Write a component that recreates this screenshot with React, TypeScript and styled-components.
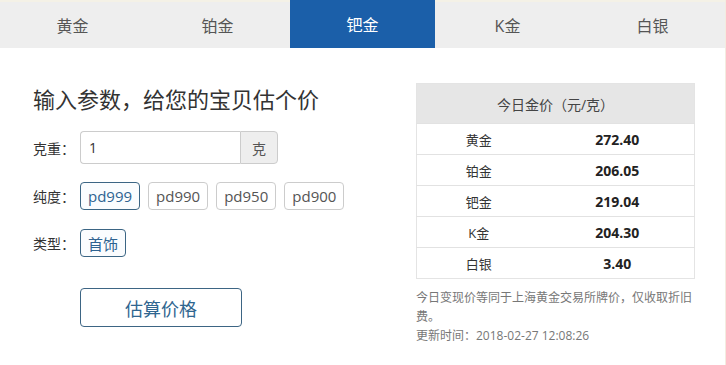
import React, { useState } from "react";
import styled, { createGlobalStyle } from "styled-components";

const Global = createGlobalStyle`
  html, body { margin: 0; padding: 0; background: #fff; }
  body { font-family: "Open Sans", "Noto Sans CJK SC", sans-serif; color: #333; }
  * { box-sizing: border-box; }
`;

const Page = styled.div`
  width: 726px;
  height: 365px;
  border-right: 1px solid #f3ece0;
  overflow: hidden;
`;

const TabBar = styled.div`
  display: grid;
  grid-template-columns: repeat(5, 145px);
  height: 48px;
  background: #eeeeee;
  border-top: 2px solid #f4f1e6;
`;

const Tab = styled.div<{ $active?: boolean }>`
  display: flex;
  align-items: center;
  justify-content: center;
  font-size: 16px;
  margin-top: ${(p) => (p.$active ? "-2px" : "0")};
  color: ${(p) => (p.$active ? "#fff" : "#555")};
  background: ${(p) => (p.$active ? "#1b5fa9" : "transparent")};
`;

const Main = styled.div`
  display: grid;
  grid-template-columns: 383px 279px;
  padding: 35px 0 0 33px;
`;

const Left = styled.div`
  display: flex;
  flex-direction: column;
`;

const Title = styled.h2`
  margin: 0 0 15px;
  font-size: 22px;
  font-weight: normal;
  line-height: 33px;
  color: #333;
`;

const Row = styled.div<{ $gap?: number }>`
  display: flex;
  align-items: center;
  margin-bottom: ${(p) => p.$gap ?? 18}px;
`;

const Label = styled.span`
  width: 47px;
  font-size: 14px;
  color: #333;
`;

const InputGroup = styled.div`
  display: flex;
  height: 33px;
`;

const Input = styled.div`
  width: 160px;
  border: 1px solid #cccccc;
  border-right: none;
  border-radius: 4px 0 0 4px;
  padding: 0 8px;
  display: flex;
  align-items: center;
  font-size: 14px;
  color: #333;
`;

const Addon = styled.div`
  width: 38px;
  border: 1px solid #cccccc;
  border-radius: 0 4px 4px 0;
  background: #eeeeee;
  display: flex;
  align-items: center;
  justify-content: center;
  font-size: 14px;
  color: #555;
`;

const Options = styled.div`
  display: flex;
  gap: 8px;
`;

const Option = styled.button<{ $selected?: boolean }>`
  height: 28px;
  padding: 0 7px;
  min-width: 46px;
  font-family: inherit;
  font-size: 15px;
  border-radius: 4px;
  cursor: pointer;
  background: ${(p) => (p.$selected ? "#fafcfe" : "#fff")};
  color: ${(p) => (p.$selected ? "#2e6391" : "#555")};
  border: 1px solid ${(p) => (p.$selected ? "#3b6584" : "#cccccc")};
`;

const Submit = styled.button`
  margin-left: 47px;
  width: 162px;
  height: 39px;
  border: 1px solid #3d6584;
  border-radius: 4px;
  background: #fff;
  color: #2f6690;
  font-family: inherit;
  font-size: 18px;
  cursor: pointer;
`;

const Right = styled.div`
  display: flex;
  flex-direction: column;
`;

const Table = styled.table`
  width: 279px;
  border-collapse: collapse;
  font-size: 13px;
  color: #333;
  border: 1px solid #e4e4e4;
`;

const HeadCell = styled.th`
  height: 40px;
  background: #e6e6e6;
  font-weight: normal;
  font-size: 14px;
  color: #444;
`;

const Cell = styled.td<{ $bold?: boolean; $w?: number }>`
  height: 31px;
  border-top: 1px solid #e2e2e2;
  text-align: center;
  font-weight: ${(p) => (p.$bold ? 700 : 400)};
  font-size: ${(p) => (p.$bold ? "14px" : "13px")};
  color: ${(p) => (p.$bold ? "#222" : "#333")};
  width: ${(p) => (p.$w ? `${p.$w}px` : "auto")};
`;

const Note = styled.p`
  margin: 9px 0 0;
  font-size: 12px;
  line-height: 19px;
  color: #777;
`;

const tabs = ["黄金", "铂金", "钯金", "K金", "白银"];
const purities = ["pd999", "pd990", "pd950", "pd900"];
const prices: [string, string][] = [
  ["黄金", "272.40"],
  ["铂金", "206.05"],
  ["钯金", "219.04"],
  ["K金", "204.30"],
  ["白银", "3.40"],
];

export default function App() {
  const [purity, setPurity] = useState("pd999");
  return (
    <Page>
      <Global />
      <TabBar>
        {tabs.map((t) => (
          <Tab key={t} $active={t === "钯金"}>
            {t}
          </Tab>
        ))}
      </TabBar>
      <Main>
        <Left>
          <Title>输入参数，给您的宝贝估个价</Title>
          <Row>
            <Label>克重：</Label>
            <InputGroup>
              <Input>1</Input>
              <Addon>克</Addon>
            </InputGroup>
          </Row>
          <Row $gap={19}>
            <Label>纯度：</Label>
            <Options>
              {purities.map((p) => (
                <Option key={p} $selected={p === purity} onClick={() => setPurity(p)}>
                  {p}
                </Option>
              ))}
            </Options>
          </Row>
          <Row $gap={31}>
            <Label>类型：</Label>
            <Options>
              <Option $selected>首饰</Option>
            </Options>
          </Row>
          <Row>
            <Submit>估算价格</Submit>
          </Row>
        </Left>
        <Right>
          <Table>
            <thead>
              <tr>
                <HeadCell colSpan={2}>今日金价（元/克）</HeadCell>
              </tr>
            </thead>
            <tbody>
              {prices.map(([n, v]) => (
                <tr key={n}>
                  <Cell $w={124}>{n}</Cell>
                  <Cell $bold>{v}</Cell>
                </tr>
              ))}
            </tbody>
          </Table>
          <Note>
            今日变现价等同于上海黄金交易所牌价，仅收取折旧费。
            <br />
            更新时间：2018-02-27 12:08:26
          </Note>
        </Right>
      </Main>
    </Page>
  );
}
